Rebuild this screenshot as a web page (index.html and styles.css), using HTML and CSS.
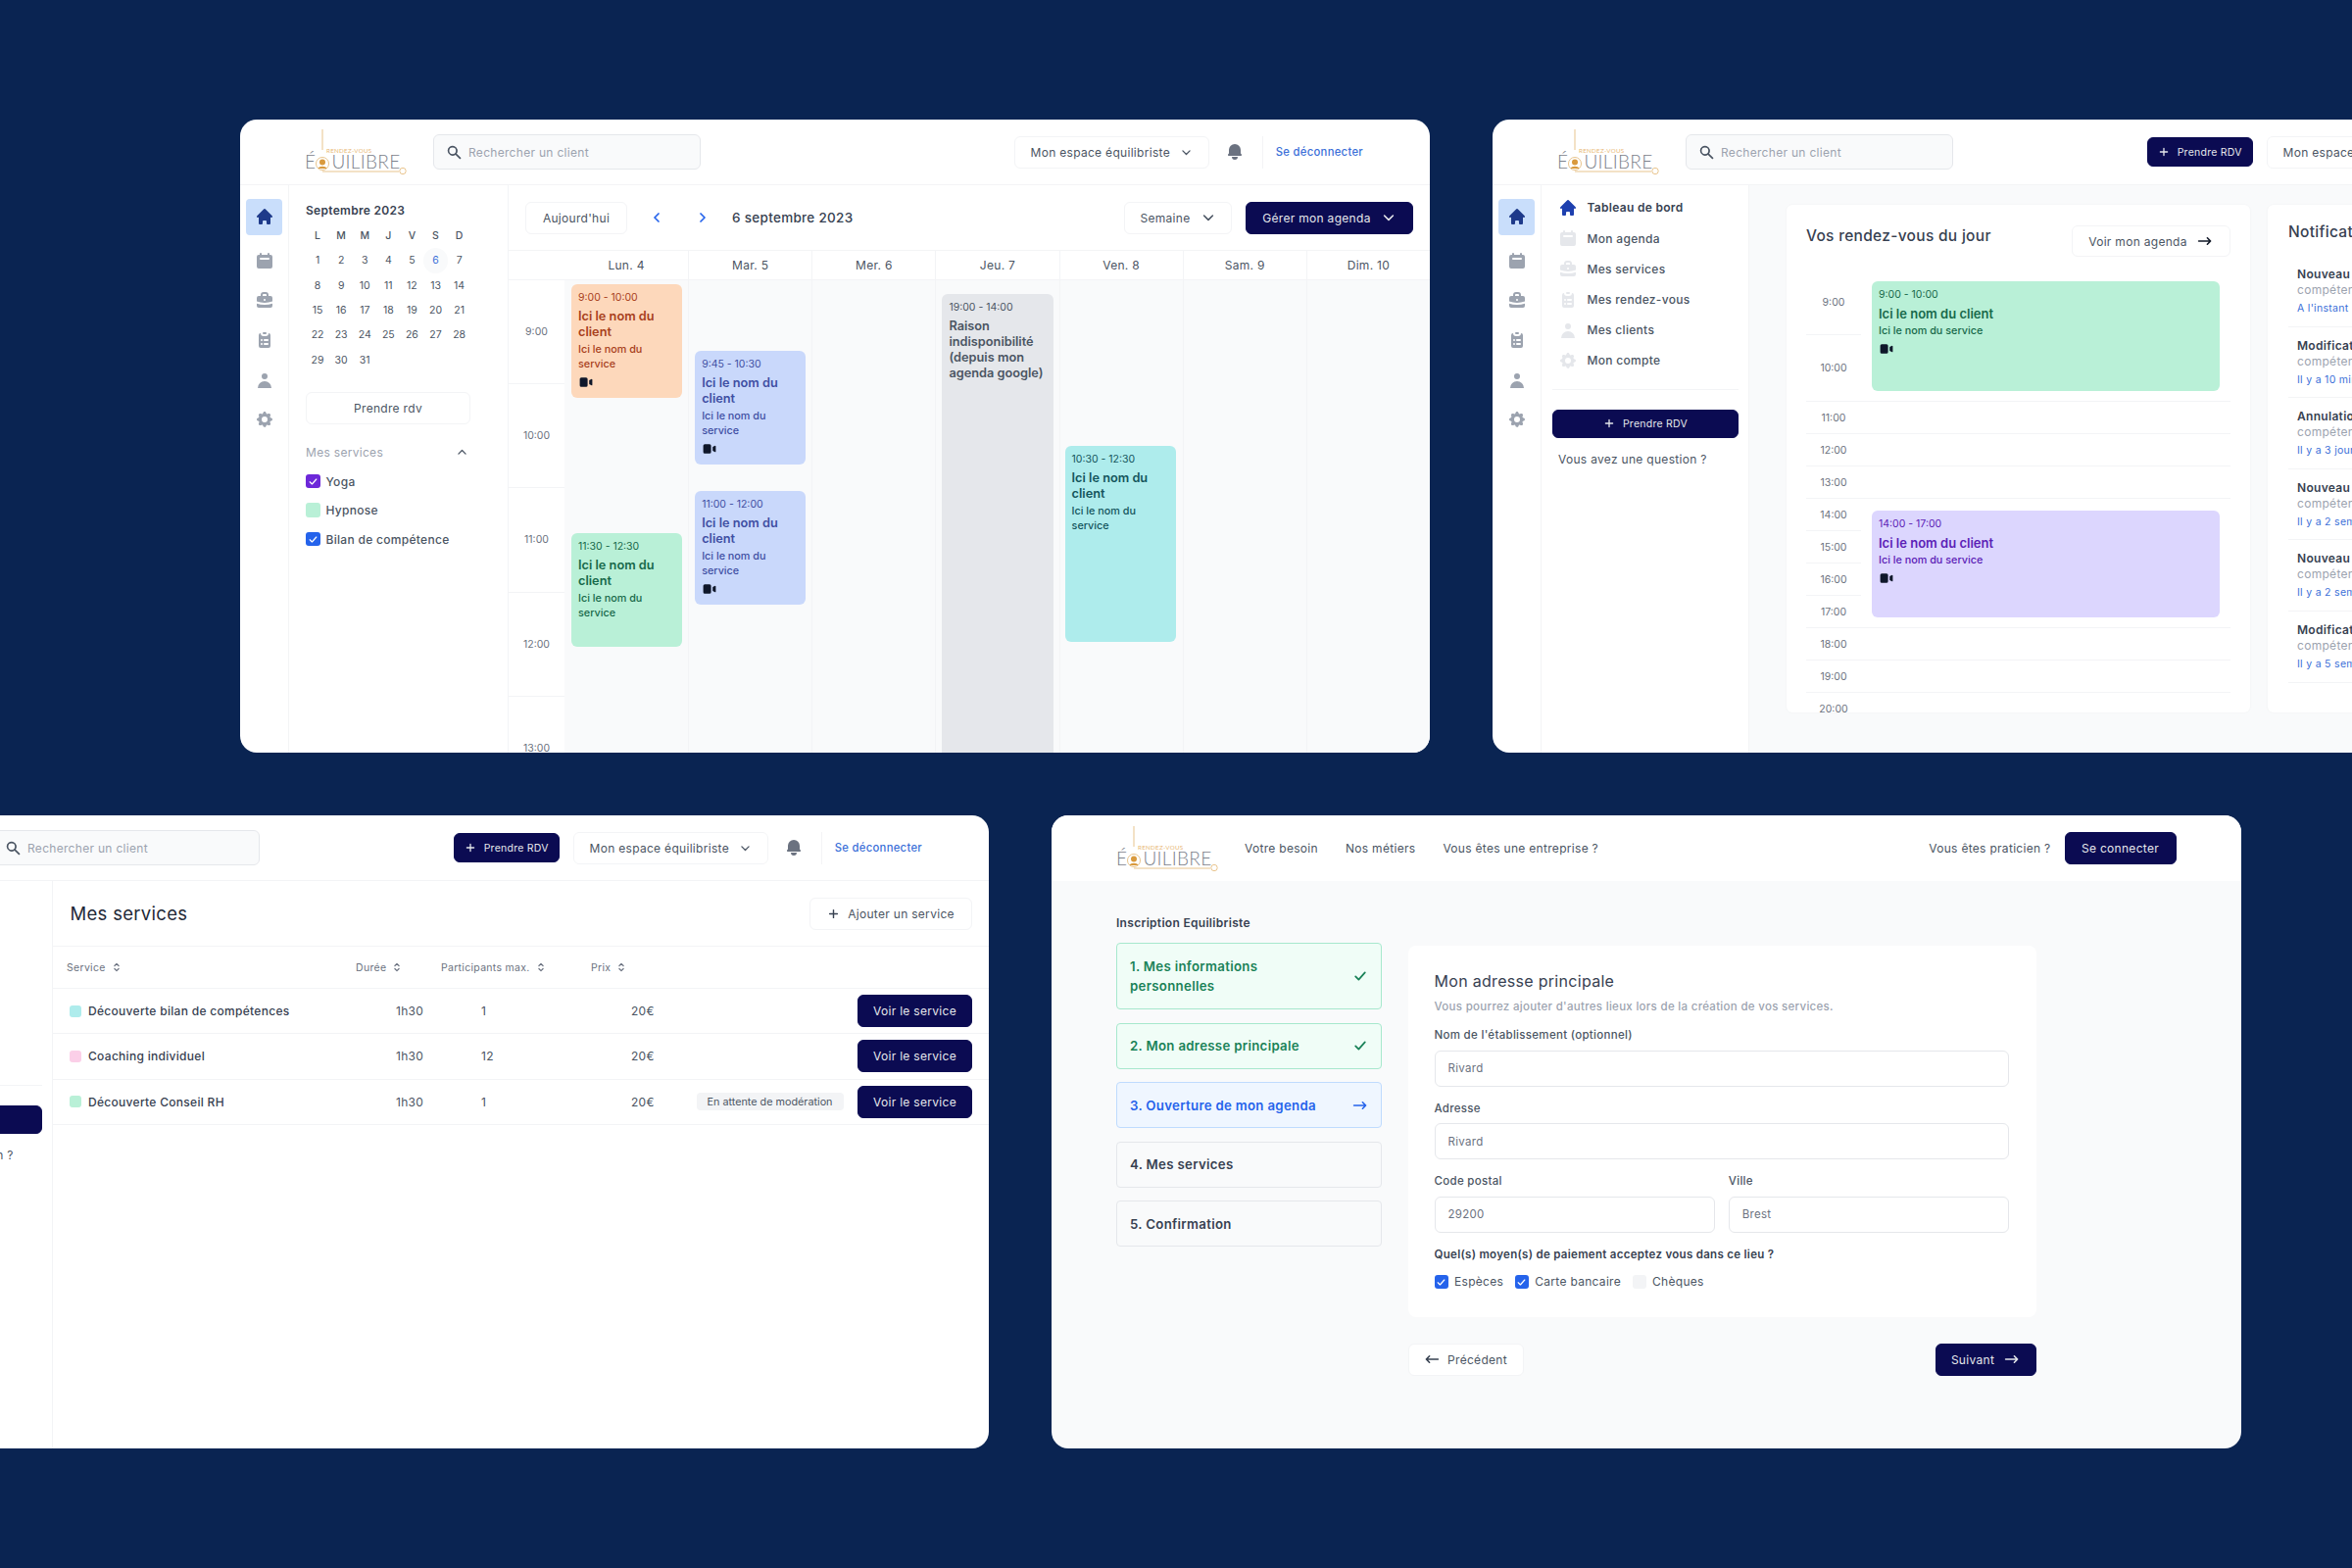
FILE: index.html
```html
<!DOCTYPE html>
<html lang="fr">
<head>
    <meta charset="UTF-8">
    <title>Equilibre - Espace equilibriste</title>
    <link rel="stylesheet" href="styles.css">
</head>
<body>
    <!-- shared icons -->
    <svg class="sprite" xmlns="http://www.w3.org/2000/svg">
        <symbol id="logo" viewBox="0 0 106 48">
            <path d="M18 1V22" fill="none" stroke="#e8c48d" stroke-width="1"/>
            <path d="M18 44H96" fill="none" stroke="#e8c48d" stroke-width="1"/>
            <circle cx="18" cy="36" r="6.5" fill="none" stroke="#e8c48d" stroke-width="1"/>
            <circle cx="18" cy="34.5" r="3" fill="#d99a3e"/>
            <path d="M13.5 41c1-3 8-3 9 0z" fill="#d99a3e"/>
            <circle cx="100" cy="43.5" r="3.2" fill="none" stroke="#e8c48d" stroke-width="1"/>
            <text x="22" y="24.5" font-family="Lato, sans-serif" font-size="6.2" letter-spacing=".3" fill="#e8b877">RENDEZ-VOUS</text>
            <text x="0" y="41" font-family="Lato, sans-serif" font-size="19" font-weight="300" fill="#7c828c">É</text>
            <text x="27.500" y="41" font-family="Lato, sans-serif" font-size="19" font-weight="300" fill="#7c828c">UILIBRE</text>
        </symbol>
        <symbol id="i-home" viewBox="0 0 20 20"><path d="M10.707 2.293a1 1 0 00-1.414 0l-7 7a1 1 0 001.414 1.414L4 10.414V17a1 1 0 001 1h2a1 1 0 001-1v-2a1 1 0 011-1h2a1 1 0 011 1v2a1 1 0 001 1h2a1 1 0 001-1v-6.586l.293.293a1 1 0 001.414-1.414l-7-7z"/></symbol>
        <symbol id="i-cal" viewBox="0 0 20 20"><path fill-rule="evenodd" d="M6 2a1 1 0 00-1 1v1H4a2 2 0 00-2 2v10a2 2 0 002 2h12a2 2 0 002-2V6a2 2 0 00-2-2h-1V3a1 1 0 10-2 0v1H7V3a1 1 0 00-1-1zm0 5a1 1 0 000 2h8a1 1 0 100-2H6z"/></symbol>
        <symbol id="i-case" viewBox="0 0 20 20"><path fill-rule="evenodd" d="M6 6V5a3 3 0 013-3h2a3 3 0 013 3v1h2a2 2 0 012 2v3.57A22.952 22.952 0 0110 13a22.95 22.95 0 01-8-1.43V8a2 2 0 012-2h2zm2-1a1 1 0 011-1h2a1 1 0 011 1v1H8V5zm1 5a1 1 0 011-1h.01a1 1 0 110 2H10a1 1 0 01-1-1z"/><path d="M2 13.692V16a2 2 0 002 2h12a2 2 0 002-2v-2.308A24.974 24.974 0 0110 15c-2.796 0-5.487-.46-8-1.308z"/></symbol>
        <symbol id="i-list" viewBox="0 0 20 20"><path d="M9 2a1 1 0 000 2h2a1 1 0 100-2H9z"/><path fill-rule="evenodd" d="M4 5a2 2 0 012-2 3 3 0 003 3h2a3 3 0 003-3 2 2 0 012 2v11a2 2 0 01-2 2H6a2 2 0 01-2-2V5zm3 4a1 1 0 000 2h.01a1 1 0 100-2H7zm3 0a1 1 0 000 2h3a1 1 0 100-2h-3zm-3 4a1 1 0 100 2h.01a1 1 0 100-2H7zm3 0a1 1 0 100 2h3a1 1 0 100-2h-3z"/></symbol>
        <symbol id="i-user" viewBox="0 0 20 20"><path fill-rule="evenodd" d="M10 9a3 3 0 100-6 3 3 0 000 6zm-7 9a7 7 0 1114 0H3z"/></symbol>
        <symbol id="i-cog" viewBox="0 0 20 20"><path fill-rule="evenodd" d="M11.49 3.17c-.38-1.56-2.6-1.56-2.98 0a1.532 1.532 0 01-2.286.948c-1.372-.836-2.942.734-2.106 2.106.54.886.061 2.042-.947 2.287-1.561.379-1.561 2.6 0 2.978a1.532 1.532 0 01.947 2.287c-.836 1.372.734 2.942 2.106 2.106a1.532 1.532 0 012.287.947c.379 1.561 2.6 1.561 2.978 0a1.533 1.533 0 012.287-.947c1.372.836 2.942-.734 2.106-2.106a1.533 1.533 0 01.947-2.287c1.561-.379 1.561-2.6 0-2.978a1.532 1.532 0 01-.947-2.287c.836-1.372-.734-2.942-2.106-2.106a1.532 1.532 0 01-2.287-.947zM10 13a3 3 0 100-6 3 3 0 000 6z"/></symbol>
        <symbol id="i-bell" viewBox="0 0 20 20"><path d="M10 2a6 6 0 00-6 6v3.586l-.707.707A1 1 0 004 14h12a1 1 0 00.707-1.707L16 11.586V8a6 6 0 00-6-6zM10 18a3 3 0 01-3-3h6a3 3 0 01-3 3z"/></symbol>
        <symbol id="i-video" viewBox="0 0 20 20"><path d="M2 6a2 2 0 012-2h6a2 2 0 012 2v8a2 2 0 01-2 2H4a2 2 0 01-2-2V6zM14.553 7.106A1 1 0 0014 8v4a1 1 0 00.553.894l2 1A1 1 0 0018 13V7a1 1 0 00-1.447-.894l-2 1z"/></symbol>
        <symbol id="i-search" viewBox="0 0 20 20"><path fill-rule="evenodd" d="M8 4a4 4 0 100 8 4 4 0 000-8zM2 8a6 6 0 1110.89 3.476l4.817 4.817a1 1 0 01-1.414 1.414l-4.816-4.816A6 6 0 012 8z"/></symbol>
        <symbol id="i-down" viewBox="0 0 20 20"><path d="M4.5 7.5L10 13l5.500-5.500" fill="none" stroke="currentColor" stroke-width="2" stroke-linecap="round" stroke-linejoin="round"/></symbol>
        <symbol id="i-up" viewBox="0 0 20 20"><path d="M4.5 12.500L10 7l5.500 5.500" fill="none" stroke="currentColor" stroke-width="2" stroke-linecap="round" stroke-linejoin="round"/></symbol>
        <symbol id="i-left" viewBox="0 0 20 20"><path d="M12.500 5L7.500 10l5 5" fill="none" stroke="currentColor" stroke-width="2.200" stroke-linecap="round" stroke-linejoin="round"/></symbol>
        <symbol id="i-right" viewBox="0 0 20 20"><path d="M7.500 5l5 5-5 5" fill="none" stroke="currentColor" stroke-width="2.200" stroke-linecap="round" stroke-linejoin="round"/></symbol>
        <symbol id="i-plus" viewBox="0 0 20 20"><path d="M10 4v12M4 10h12" fill="none" stroke="currentColor" stroke-width="2.200" stroke-linecap="round"/></symbol>
        <symbol id="i-arrow" viewBox="0 0 20 20"><path d="M2 10h15M13 6l4 4-4 4" fill="none" stroke="currentColor" stroke-width="2" stroke-linecap="round" stroke-linejoin="round"/></symbol>
        <symbol id="i-back" viewBox="0 0 20 20"><path d="M18 10H3M7 6l-4 4 4 4" fill="none" stroke="currentColor" stroke-width="2" stroke-linecap="round" stroke-linejoin="round"/></symbol>
        <symbol id="i-check" viewBox="0 0 20 20"><path d="M4 10.500l4 4 8-9" fill="none" stroke="currentColor" stroke-width="2.200" stroke-linecap="round" stroke-linejoin="round"/></symbol>
        <symbol id="i-sort" viewBox="0 0 20 20"><path d="M6.500 7.500L10 4l3.500 3.500M6.500 12.500L10 16l3.500-3.500" fill="none" stroke="currentColor" stroke-width="2" stroke-linecap="round" stroke-linejoin="round"/></symbol>
    </svg>

    <div class="wall">
        <div class="row row-top">

            <!-- agenda -->
            <section class="window">
                <header class="topbar">
                    <svg class="logo"><use href="#logo"/></svg>
                    <div class="search"><svg class="ico-search"><use href="#i-search"/></svg>Rechercher un client</div>
                    <div class="topbar-right">
                        <button class="btn btn-space">Mon espace équilibriste<svg class="ico-sm"><use href="#i-down"/></svg></button>
                        <svg class="ico-bell"><use href="#i-bell"/></svg>
                        <a class="logout">Se déconnecter</a>
                    </div>
                </header>
                <div class="app">
                    <nav class="rail">
                        <span class="rail-item active"><svg><use href="#i-home"/></svg></span>
                        <span class="rail-item"><svg><use href="#i-cal"/></svg></span>
                        <span class="rail-item"><svg><use href="#i-case"/></svg></span>
                        <span class="rail-item"><svg><use href="#i-list"/></svg></span>
                        <span class="rail-item"><svg><use href="#i-user"/></svg></span>
                        <span class="rail-item"><svg><use href="#i-cog"/></svg></span>
                    </nav>
                    <aside class="cal-panel">
                        <div class="cal-title">Septembre 2023</div>
                        <div class="cal-grid">
                            <b>L</b><b>M</b><b>M</b><b>J</b><b>V</b><b>S</b><b>D</b>
                            <span>1</span><span>2</span><span>3</span><span>4</span><span>5</span><span class="today">6</span><span>7</span>
                            <span>8</span><span>9</span><span>10</span><span>11</span><span>12</span><span>13</span><span>14</span>
                            <span>15</span><span>16</span><span>17</span><span>18</span><span>19</span><span>20</span><span>21</span>
                            <span>22</span><span>23</span><span>24</span><span>25</span><span>26</span><span>27</span><span>28</span>
                            <span>29</span><span>30</span><span>31</span>
                        </div>
                        <button class="btn btn-rdv">Prendre rdv</button>
                        <div class="svc-toggle">Mes services<svg class="ico-sm"><use href="#i-up"/></svg></div>
                        <ul class="svc-list">
                            <li><span class="box box-purple"><svg><use href="#i-check"/></svg></span>Yoga</li>
                            <li><span class="box box-mint"></span>Hypnose</li>
                            <li><span class="box box-blue"><svg><use href="#i-check"/></svg></span>Bilan de compétence</li>
                        </ul>
                    </aside>
                    <main class="agenda">
                        <div class="toolbar">
                            <button class="btn btn-today">Aujourd'hui</button>
                            <svg class="ico-nav first"><use href="#i-left"/></svg>
                            <svg class="ico-nav"><use href="#i-right"/></svg>
                            <div class="agenda-date">6 septembre 2023</div>
                            <button class="btn btn-week">Semaine<svg class="ico-md"><use href="#i-down"/></svg></button>
                            <button class="btn btn-dark btn-manage">Gérer mon agenda<svg class="ico-md"><use href="#i-down"/></svg></button>
                        </div>
                        <div class="week-head">
                            <span></span><span>Lun. 4</span><span>Mar. 5</span><span>Mer. 6</span><span>Jeu. 7</span><span>Ven. 8</span><span>Sam. 9</span><span>Dim. 10</span>
                        </div>
                        <div class="week-body">
                            <div class="hours">
                                <span>9:00</span><span>10:00</span><span>11:00</span><span>12:00</span><span>13:00</span>
                            </div>
                            <div class="day">
                                <article class="event ev-orange" style="top:4px;height:116px">
                                    <time>9:00 - 10:00</time><h4>Ici le nom du client</h4><p>Ici le nom du service</p><svg class="ico-cam"><use href="#i-video"/></svg>
                                </article>
                                <article class="event ev-green" style="top:258px;height:116px">
                                    <time>11:30 - 12:30</time><h4>Ici le nom du client</h4><p>Ici le nom du service</p>
                                </article>
                            </div>
                            <div class="day">
                                <article class="event ev-blue" style="top:72px;height:116px">
                                    <time>9:45 - 10:30</time><h4>Ici le nom du client</h4><p>Ici le nom du service</p><svg class="ico-cam"><use href="#i-video"/></svg>
                                </article>
                                <article class="event ev-blue" style="top:215px;height:116px">
                                    <time>11:00 - 12:00</time><h4>Ici le nom du client</h4><p>Ici le nom du service</p><svg class="ico-cam"><use href="#i-video"/></svg>
                                </article>
                            </div>
                            <div class="day"></div>
                            <div class="day">
                                <article class="event ev-gray" style="top:14px;height:480px">
                                    <time>19:00 - 14:00</time><h4>Raison indisponibilité (depuis mon agenda google)</h4>
                                </article>
                            </div>
                            <div class="day">
                                <article class="event ev-teal" style="top:169px;height:200px">
                                    <time>10:30 - 12:30</time><h4>Ici le nom du client</h4><p>Ici le nom du service</p>
                                </article>
                            </div>
                            <div class="day"></div>
                            <div class="day"></div>
                        </div>
                    </main>
                </div>
            </section>

            <!-- tableau de bord -->
            <section class="window">
                <header class="topbar">
                    <svg class="logo"><use href="#logo"/></svg>
                    <div class="search"><svg class="ico-search"><use href="#i-search"/></svg>Rechercher un client</div>
                    <div class="topbar-right">
                        <button class="btn btn-dark btn-top-rdv"><svg class="ico-xs"><use href="#i-plus"/></svg>Prendre RDV</button>
                        <button class="btn btn-space">Mon espace équilibriste<svg class="ico-sm"><use href="#i-down"/></svg></button>
                        <svg class="ico-bell"><use href="#i-bell"/></svg>
                        <a class="logout">Se déconnecter</a>
                    </div>
                </header>
                <div class="app">
                    <nav class="rail">
                        <span class="rail-item active"><svg><use href="#i-home"/></svg></span>
                        <span class="rail-item"><svg><use href="#i-cal"/></svg></span>
                        <span class="rail-item"><svg><use href="#i-case"/></svg></span>
                        <span class="rail-item"><svg><use href="#i-list"/></svg></span>
                        <span class="rail-item"><svg><use href="#i-user"/></svg></span>
                        <span class="rail-item"><svg><use href="#i-cog"/></svg></span>
                    </nav>
                    <aside class="nav-panel">
                        <ul class="nav-list">
                            <li class="current"><svg><use href="#i-home"/></svg>Tableau de bord</li>
                            <li><svg><use href="#i-cal"/></svg>Mon agenda</li>
                            <li><svg><use href="#i-case"/></svg>Mes services</li>
                            <li><svg><use href="#i-list"/></svg>Mes rendez-vous</li>
                            <li><svg><use href="#i-user"/></svg>Mes clients</li>
                            <li><svg><use href="#i-cog"/></svg>Mon compte</li>
                        </ul>
                        <button class="btn btn-dark btn-side"><svg class="ico-xs"><use href="#i-plus"/></svg>Prendre RDV</button>
                        <div class="question">Vous avez une question ?</div>
                    </aside>
                    <main class="dash">
                        <section class="panel schedule">
                            <div class="schedule-head">
                                <h3>Vos rendez-vous du jour</h3>
                                <button class="btn btn-see">Voir mon agenda<svg class="ico-md"><use href="#i-arrow"/></svg></button>
                            </div>
                            <div class="timeline">
                                <div class="tl-row tall short"><span>9:00</span></div>
                                <div class="tl-row tall2"><span>10:00</span></div>
                                <div class="tl-row"><span>11:00</span></div>
                                <div class="tl-row"><span>12:00</span></div>
                                <div class="tl-row"><span>13:00</span></div>
                                <div class="tl-row short"><span>14:00</span></div>
                                <div class="tl-row short"><span>15:00</span></div>
                                <div class="tl-row short"><span>16:00</span></div>
                                <div class="tl-row"><span>17:00</span></div>
                                <div class="tl-row"><span>18:00</span></div>
                                <div class="tl-row"><span>19:00</span></div>
                                <div class="tl-row"><span>20:00</span></div>
                                <article class="event tl-event ev-green" style="top:11px;height:112px">
                                    <time>9:00 - 10:00</time><h4>Ici le nom du client</h4><p>Ici le nom du service</p><svg class="ico-cam"><use href="#i-video"/></svg>
                                </article>
                                <article class="event tl-event ev-purple" style="top:245px;height:109px">
                                    <time>14:00 - 17:00</time><h4>Ici le nom du client</h4><p>Ici le nom du service</p><svg class="ico-cam"><use href="#i-video"/></svg>
                                </article>
                            </div>
                        </section>
                        <section class="panel notifs">
                            <h3>Notifications</h3>
                            <div class="notif"><b>Nouveau rendez-vous</b><span>compétences</span><em>A l'instant</em></div>
                            <div class="notif"><b>Modification</b><span>compétences</span><em>Il y a 10 minutes</em></div>
                            <div class="notif"><b>Annulation</b><span>compétences</span><em>Il y a 3 jours</em></div>
                            <div class="notif"><b>Nouveau rendez-vous</b><span>compétences</span><em>Il y a 2 semaines</em></div>
                            <div class="notif"><b>Nouveau rendez-vous</b><span>compétences</span><em>Il y a 2 semaines</em></div>
                            <div class="notif"><b>Modification</b><span>compétences</span><em>Il y a 5 semaines</em></div>
                        </section>
                    </main>
                </div>
            </section>
        </div>

        <div class="row row-bottom">

            <!-- mes services -->
            <section class="window">
                <header class="topbar">
                    <svg class="logo"><use href="#logo"/></svg>
                    <div class="search"><svg class="ico-search"><use href="#i-search"/></svg>Rechercher un client</div>
                    <div class="topbar-right">
                        <button class="btn btn-dark btn-top-rdv"><svg class="ico-xs"><use href="#i-plus"/></svg>Prendre RDV</button>
                        <button class="btn btn-space">Mon espace équilibriste<svg class="ico-sm"><use href="#i-down"/></svg></button>
                        <svg class="ico-bell"><use href="#i-bell"/></svg>
                        <a class="logout">Se déconnecter</a>
                    </div>
                </header>
                <div class="app">
                    <nav class="rail">
                        <span class="rail-item active"><svg><use href="#i-home"/></svg></span>
                        <span class="rail-item"><svg><use href="#i-cal"/></svg></span>
                    </nav>
                    <aside class="nav-panel nav-panel-narrow">
                        <ul class="nav-list">
                            <li class="current"><svg><use href="#i-home"/></svg>Tableau de bord</li>
                            <li><svg><use href="#i-cal"/></svg>Mon agenda</li>
                            <li><svg><use href="#i-case"/></svg>Mes services</li>
                            <li><svg><use href="#i-list"/></svg>Mes rendez-vous</li>
                            <li><svg><use href="#i-user"/></svg>Mes clients</li>
                            <li><svg><use href="#i-cog"/></svg>Mon compte</li>
                        </ul>
                        <button class="btn btn-dark btn-side"><svg class="ico-xs"><use href="#i-plus"/></svg>Prendre RDV</button>
                        <div class="question">Vous avez une question ?</div>
                    </aside>
                    <main class="services">
                        <div class="services-head">
                            <h2>Mes services</h2>
                            <button class="btn btn-add"><svg class="ico-sm"><use href="#i-plus"/></svg>Ajouter un service</button>
                        </div>
                        <div class="svc-grid svc-cols">
                            <span>Service<svg><use href="#i-sort"/></svg></span>
                            <span>Durée<svg><use href="#i-sort"/></svg></span>
                            <span>Participants max.<svg><use href="#i-sort"/></svg></span>
                            <span>Prix<svg><use href="#i-sort"/></svg></span>
                        </div>
                        <div class="svc-grid svc-row">
                            <span class="svc-name"><i class="dot dot-teal"></i>Découverte bilan de compétences</span>
                            <span>1h30</span><span>1</span><span>20€</span>
                            <span class="svc-actions"><button class="btn btn-dark btn-view">Voir le service</button></span>
                        </div>
                        <div class="svc-grid svc-row">
                            <span class="svc-name"><i class="dot dot-pink"></i>Coaching individuel</span>
                            <span>1h30</span><span>12</span><span>20€</span>
                            <span class="svc-actions"><button class="btn btn-dark btn-view">Voir le service</button></span>
                        </div>
                        <div class="svc-grid svc-row">
                            <span class="svc-name"><i class="dot dot-mint"></i>Découverte Conseil RH</span>
                            <span>1h30</span><span>1</span><span>20€</span>
                            <span class="svc-actions"><em class="badge">En attente de modération</em><button class="btn btn-dark btn-view">Voir le service</button></span>
                        </div>
                    </main>
                </div>
            </section>

            <!-- inscription -->
            <section class="window window-signup">
                <header class="topbar topbar-plain">
                    <svg class="logo"><use href="#logo"/></svg>
                    <nav class="site-nav"><a>Votre besoin</a><a>Nos métiers</a><a>Vous êtes une entreprise ?</a></nav>
                    <div class="topbar-right">
                        <a class="site-link">Vous êtes praticien ?</a>
                        <button class="btn btn-dark btn-login">Se connecter</button>
                    </div>
                </header>
                <div class="signup">
                    <div class="signup-title">Inscription Equilibriste</div>
                    <div class="signup-body">
                        <ol class="steps">
                            <li class="step done two-lines"><span>1. Mes informations personnelles</span><svg><use href="#i-check"/></svg></li>
                            <li class="step done"><span>2. Mon adresse principale</span><svg><use href="#i-check"/></svg></li>
                            <li class="step current"><span>3. Ouverture de mon agenda</span><svg><use href="#i-arrow"/></svg></li>
                            <li class="step"><span>4. Mes services</span></li>
                            <li class="step"><span>5. Confirmation</span></li>
                        </ol>
                        <div class="signup-main">
                            <form class="form-card">
                                <h3>Mon adresse principale</h3>
                                <p class="form-sub">Vous pourrez ajouter d'autres lieux lors de la création de vos services.</p>
                                <div class="field"><label>Nom de l'établissement (optionnel)</label><input value="Rivard" readonly></div>
                                <div class="field"><label>Adresse</label><input value="Rivard" readonly></div>
                                <div class="field-pair">
                                    <div class="field"><label>Code postal</label><input value="29200" readonly></div>
                                    <div class="field"><label>Ville</label><input value="Brest" readonly></div>
                                </div>
                                <div class="pay-title">Quel(s) moyen(s) de paiement acceptez vous dans ce lieu ?</div>
                                <div class="pay-options">
                                    <span><span class="box box-blue"><svg><use href="#i-check"/></svg></span>Espèces</span>
                                    <span><span class="box box-blue"><svg><use href="#i-check"/></svg></span>Carte bancaire</span>
                                    <span><span class="box box-empty"></span>Chèques</span>
                                </div>
                            </form>
                            <div class="form-nav">
                                <button class="btn btn-prev"><svg class="ico-md"><use href="#i-back"/></svg>Précédent</button>
                                <button class="btn btn-dark btn-next">Suivant<svg class="ico-md"><use href="#i-arrow"/></svg></button>
                            </div>
                        </div>
                    </div>
                </div>
            </section>
        </div>
    </div>
</body>
</html>
```

FILE: styles.css
```css
* {
    box-sizing: border-box;
}

html, body {
    height: 100%;
}

body {
    margin: 0;
    background-color: #0a2452;
    font-family: Inter, "Liberation Sans", sans-serif;
    font-size: 12px;
    letter-spacing: .025em;
    color: #4b5563;
    overflow: hidden;
}

h2, h3, h4, p, ul, ol {
    margin: 0;
    padding: 0;
    font-weight: 500;
    list-style: none;
}

svg {
    fill: currentColor;
}

.sprite {
    display: none;
}

.wall {
    display: flex;
    flex-direction: column;
    gap: 64px;
    padding-top: 122px;
}

.row {
    display: flex;
    gap: 64px;
}

.row-top {
    margin-left: 245px;
}

.row-bottom {
    margin-left: -205px;
}

.window {
    flex: none;
    display: flex;
    flex-direction: column;
    width: 1214px;
    height: 646px;
    background-color: #fff;
    border-radius: 17px;
    overflow: hidden;
}

/* top bar */
.topbar {
    flex: none;
    display: flex;
    align-items: center;
    height: 67px;
    padding: 0 68px 0 66px;
    border-bottom: 1px solid #f3f4f6;
}

.topbar-plain {
    border-bottom: 0;
    padding-right: 66.500px;
}

.logo {
    flex: none;
    width: 106px;
    height: 48px;
    margin-right: 25px;
}

.search {
    display: flex;
    align-items: center;
    width: 273px;
    height: 36px;
    padding-left: 12px;
    background-color: #f9fafb;
    border: 1px solid #e5e7eb;
    border-radius: 6px;
    color: #9ca3af;
}

.ico-search {
    width: 17px;
    height: 17px;
    margin-right: 6px;
    color: #4b5563;
}

.topbar-right {
    display: flex;
    align-items: center;
    margin-left: auto;
}

.btn {
    display: flex;
    align-items: center;
    justify-content: center;
    height: 33px;
    padding: 0;
    background-color: #fff;
    border: 1px solid #f3f4f6;
    border-radius: 6px;
    font: inherit;
    font-size: 12px;
    letter-spacing: .025em;
    color: #4b5563;
}

.btn-dark {
    background-color: #0b0b52;
    border-color: #0b0b52;
    color: #e5e7eb;
}

.btn-top-rdv {
    width: 108px;
    height: 30px;
    margin-right: 14px;
    font-size: 10.5px;
}

.btn-space {
    width: 199px;
}

.ico-xs {
    width: 12px;
    height: 12px;
    margin-right: 8px;
}

.ico-sm {
    width: 13px;
    height: 13px;
    margin-left: 10px;
}

.ico-md {
    width: 16px;
    height: 16px;
    margin-left: 10px;
}

.ico-bell {
    width: 20px;
    height: 20px;
    margin-left: 16px;
    color: #6b7280;
}

.logout {
    margin-left: 18px;
    padding-left: 13px;
    border-left: 1px solid #f3f4f6;
    line-height: 33px;
    color: #3b6fd8;
    font-weight: 500;
    font-size: 11.250px;
}

/* shared app layout */
.app {
    flex: 1;
    display: flex;
    min-height: 0;
}

.rail {
    flex: none;
    display: flex;
    flex-direction: column;
    align-items: center;
    gap: 3.700px;
    width: 50px;
    padding-top: 14px;
    border-right: 1px solid #f3f4f6;
    color: #9ca3af;
}

.rail-item {
    display: flex;
    align-items: center;
    justify-content: center;
    width: 37px;
    height: 37px;
    border-radius: 4px;
}

.rail-item svg {
    width: 20px;
    height: 20px;
    margin-top: -1px;
}

.rail-item.active {
    margin-bottom: 4px;
    background-color: #c9defb;
    color: #1e3a8a;
}

/* calendar side */
.cal-panel {
    flex: none;
    width: 224px;
    padding: 18px 0 0 17px;
    border-right: 1px solid #f3f4f6;
}

.cal-title {
    line-height: 16px;
    font-weight: 600;
    color: #374151;
}

.cal-grid {
    display: grid;
    grid-template-columns: repeat(7, 24.100px);
    grid-auto-rows: 25.300px;
    margin-top: 5px;
    font-size: 10.5px;
    letter-spacing: 0;
}

.cal-grid b, .cal-grid span {
    display: flex;
    align-items: center;
    justify-content: center;
    font-weight: 400;
}

.cal-grid b {
    font-weight: 500;
}

.cal-grid .today {
    background-color: #f9fafb;
    border-radius: 50%;
    color: #3b6fd8;
}

.btn-rdv {
    width: 168px;
    margin-top: 20px;
}

.svc-toggle {
    display: flex;
    align-items: center;
    justify-content: space-between;
    width: 168px;
    margin-top: 21px;
    padding-right: 2px;
    line-height: 16px;
    color: #9ca3af;
}

.svc-toggle svg {
    color: #4b5563;
}

.svc-list {
    margin-top: 6.500px;
}

.svc-list li {
    display: flex;
    align-items: center;
    gap: 6px;
    height: 29.500px;
}

.box {
    flex: none;
    display: flex;
    align-items: center;
    justify-content: center;
    width: 14.500px;
    height: 14.500px;
    border-radius: 3px;
    color: #fff;
}

.box svg {
    width: 11px;
    height: 11px;
}

.box-purple {
    background-color: #6d28d9;
}

.box-mint {
    background-color: #b9f0d7;
}

.box-blue {
    background-color: #2563eb;
}

.box-empty {
    background-color: #f3f4f6;
}

/* week view */
.agenda {
    flex: 1;
    display: flex;
    flex-direction: column;
    min-width: 0;
}

.toolbar {
    flex: none;
    display: flex;
    align-items: center;
    height: 67px;
    padding: 0 17px;
    border-bottom: 1px solid #f3f4f6;
}

.btn-today {
    width: 104px;
}

.ico-nav {
    width: 16px;
    height: 16px;
    margin-left: 31px;
    color: #2563eb;
}

.ico-nav.first {
    margin-left: 22px;
}

.agenda-date {
    margin-left: 22px;
    font-size: 13.500px;
    font-weight: 500;
    color: #374151;
}

.btn-week {
    width: 110px;
    margin-left: auto;
}

.btn-manage {
    width: 171px;
    margin-left: 14px;
}

.week-head, .week-body {
    display: grid;
    grid-template-columns: 57px repeat(7, 1fr);
}

.week-head {
    flex: none;
    height: 30px;
    border-bottom: 1px solid #f3f4f6;
}

.week-head span {
    display: flex;
    align-items: center;
    justify-content: center;
    border-left: 1px solid #f3f4f6;
}

.week-head span:first-child, .week-head span:nth-child(2) {
    border-left: 0;
}

.week-body {
    flex: 1;
    min-height: 0;
}

.hours span {
    display: flex;
    align-items: center;
    justify-content: center;
    height: 106.200px;
    border-bottom: 1px solid #f3f4f6;
    font-size: 10.5px;
    letter-spacing: 0;
    color: #6b7280;
}

.day {
    position: relative;
    background-color: #f9fafb;
    border-left: 1px solid #f3f4f6;
}

.day:nth-child(2) {
    border-left: 0;
}

.event {
    position: absolute;
    left: 6px;
    right: 6px;
    padding: 7px 6px 0 7px;
    border-radius: 6px;
    overflow: hidden;
    font-size: 10.500px;
    letter-spacing: 0;
}

.day:nth-child(2) .event {
    left: 7px;
}

.day:nth-child(6) .event {
    left: 5px;
    right: 7px;
}

.event time {
    display: block;
    line-height: 14px;
}

.event h4 {
    margin-top: 3.500px;
    font-size: 12.750px;
    font-weight: 600;
    line-height: 16px;
}

.event p {
    margin-top: 2px;
    font-size: 10.800px;
    line-height: 15px;
}

.ico-cam {
    display: block;
    width: 16px;
    height: 16px;
    margin-top: 3px;
    color: #0f172a;
}

.ev-orange { background-color: #fdd8bb; color: #a8401c; }
.ev-green { background-color: #b9f0d7; color: #17694a; }
.ev-blue { background-color: #c9d8fb; color: #3f4fa3; }
.ev-gray { background-color: #e5e7eb; color: #4b5563; }
.ev-teal { background-color: #aeecec; color: #14555c; }
.ev-purple { background-color: #dcd6fe; color: #5b21b6; }

/* dashboard */
.nav-panel {
    flex: none;
    width: 212px;
    padding: 7.400px 10px 0 11px;
    border-right: 1px solid #f3f4f6;
}

.nav-panel-narrow {
    width: 209px;
}

.nav-list {
    padding-bottom: 13px;
    border-bottom: 1px solid #f3f4f6;
}

.nav-list li {
    display: flex;
    align-items: center;
    gap: 10px;
    height: 31.200px;
    padding-left: 5.500px;
    color: #4b5563;
}

.nav-list svg {
    width: 20px;
    height: 20px;
    color: #e5e7eb;
}

.nav-list .current {
    font-weight: 600;
    color: #374151;
}

.nav-list .current svg {
    color: #1e40af;
}

.btn-side {
    width: 100%;
    height: 29px;
    margin-top: 20px;
    font-size: 10.500px;
}

.question {
    margin: 14px 0 0 6px;
    line-height: 16px;
    color: #4b5563;
}

.dash {
    flex: 1;
    display: flex;
    gap: 18.500px;
    padding: 20px 0 0 38px;
    background-color: #f9fafb;
    min-width: 0;
}

.panel {
    flex: none;
    height: 518px;
    background-color: #fff;
    border-radius: 6px;
    box-shadow: 0 0 3px rgba(0, 0, 0, .04);
    overflow: hidden;
}

.schedule {
    position: relative;
    width: 472.500px;
    padding: 0 20px;
}

.schedule-head {
    display: flex;
    justify-content: space-between;
    align-items: flex-start;
    height: 67px;
    padding-top: 21px;
}

.schedule-head h3 {
    font-size: 15.500px;
    color: #374151;
    line-height: 22px;
}

.btn-see {
    width: 162px;
    height: 32px;
}

.btn-see svg {
    color: #111827;
}

.timeline {
    position: relative;
}

.tl-row {
    height: 33px;
    border-bottom: 1px solid #f3f4f6;
}

.tl-row span {
    display: flex;
    align-items: center;
    justify-content: center;
    width: 56px;
    height: 100%;
    font-size: 10.500px;
    letter-spacing: 0;
    color: #6b7280;
}

.tl-row.tall {
    height: 66px;
}

.tl-row.tall2 {
    height: 68px;
}

.tl-row.short {
    border-bottom: 0;
}

.tl-row.short span {
    border-bottom: 1px solid #f3f4f6;
}

.tl-event {
    left: 67px;
    right: 11px;
}

.tl-event h4 {
    font-size: 13px;
}

.notifs {
    width: 300px;
    padding: 17px 0 0 21px;
}

.notifs h3 {
    font-size: 15.500px;
    line-height: 22px;
    color: #374151;
    margin-bottom: 13px;
}

.notif {
    display: flex;
    flex-direction: column;
    height: 72.600px;
    padding: 11px 0 0 9px;
    border-bottom: 1px solid #f3f4f6;
    white-space: nowrap;
}

.notif b {
    font-weight: 600;
    line-height: 16px;
    color: #374151;
}

.notif span {
    line-height: 16px;
    color: #9ca3af;
}

.notif em {
    margin-top: 4px;
    font-style: normal;
    font-size: 10.500px;
    line-height: 14px;
    color: #3b6fd8;
}

/* services table */
.services {
    flex: 1;
    min-width: 0;
}

.services-head {
    display: flex;
    justify-content: space-between;
    align-items: center;
    height: 67px;
    padding: 0 17px 0 17.500px;
    border-bottom: 1px solid #f3f4f6;
}

.services-head h2 {
    font-size: 18.500px;
    font-weight: 400;
    color: #1f2937;
}

.btn-add {
    width: 166px;
}

.btn-add .ico-sm {
    margin: 0 8px 0 0;
    color: #374151;
}

.svc-grid {
    display: grid;
    grid-template-columns: 309px 87px 153px 1fr;
    align-items: center;
    border-bottom: 1px solid #f3f4f6;
}

.svc-cols {
    height: 43px;
    font-size: 10.500px;
    color: #6b7280;
}

.svc-cols span {
    display: flex;
    align-items: center;
    gap: 5px;
}

.svc-cols span:first-child {
    padding-left: 14px;
}

.svc-cols svg {
    width: 12px;
    height: 12px;
}

.svc-row {
    grid-template-columns: 309px 87px 153px 43px 1fr;
    height: 46.300px;
}

.svc-row span {
    padding-left: 41px;
}

.svc-row .svc-name {
    display: flex;
    align-items: center;
    gap: 7px;
    padding-left: 17px;
    font-weight: 500;
    color: #374151;
}

.dot {
    width: 12px;
    height: 12px;
    border-radius: 3px;
}

.dot-teal { background-color: #aeecec; }
.dot-pink { background-color: #fbcfe8; }
.dot-mint { background-color: #b9f0d7; }

.svc-row .svc-actions {
    display: flex;
    align-items: center;
    justify-content: flex-end;
    gap: 14.500px;
    padding: 0 17px 0 0;
}

.badge {
    display: flex;
    align-items: center;
    justify-content: center;
    width: 150px;
    height: 18px;
    background-color: #f3f4f6;
    border-radius: 4px;
    font-style: normal;
    font-size: 10.800px;
    letter-spacing: 0;
}

.btn-view {
    width: 117px;
}

/* sign up */
.window-signup {
    background-color: #f9fafb;
}

.window-signup .topbar {
    background-color: #fff;
}

.site-nav {
    display: flex;
    gap: 28px;
    font-size: 12px;
}

.site-link {
    margin-right: 14px;
}

.btn-login {
    width: 114px;
}

.signup {
    padding: 35px 0 0 66px;
}

.signup-title {
    line-height: 16px;
    font-weight: 600;
    color: #374151;
}

.signup-body {
    display: flex;
    gap: 26.500px;
    margin-top: 12px;
}

.steps {
    flex: none;
    display: flex;
    flex-direction: column;
    gap: 13.500px;
    width: 271px;
}

.step {
    display: flex;
    align-items: center;
    justify-content: space-between;
    height: 47px;
    padding: 0 13px;
    background-color: #f9fafb;
    border: 1px solid #e5e7eb;
    border-radius: 4px;
    font-size: 13.250px;
    font-weight: 600;
    line-height: 20px;
    color: #374151;
}

.step svg {
    flex: none;
    width: 16px;
    height: 16px;
}

.two-lines {
    height: 68px;
}

.two-lines span {
    width: 190px;
}

.step.done {
    background-color: #f0fdf7;
    border-color: #a7e8cd;
    color: #1a8258;
}

.step.current {
    background-color: #eff6ff;
    border-color: #bfdbfe;
    color: #2563eb;
}

.signup-main {
    margin-top: 2.500px;
}

.form-card {
    width: 641px;
    height: 379px;
    padding: 24px 27.500px 0 27px;
    background-color: #fff;
    border-radius: 8px;
}

.form-card h3 {
    font-size: 16px;
    font-weight: 400;
    line-height: 24px;
    color: #374151;
}

.form-sub {
    margin: 6px 0 13.500px;
    line-height: 16px;
    font-size: 11.500px;
    color: #9ca3af;
}

.field {
    margin-bottom: 14px;
}

.field label {
    display: block;
    margin-bottom: 7.500px;
    line-height: 16px;
    font-size: 11.500px;
    font-weight: 500;
}

.field input {
    display: block;
    width: 100%;
    height: 37px;
    padding: 0 13px;
    border: 1px solid #e5e7eb;
    border-radius: 6px;
    font: inherit;
    font-size: 11.500px;
    letter-spacing: .025em;
    color: #6b7280;
}

.field-pair {
    display: grid;
    grid-template-columns: 1fr 1fr;
    gap: 14px;
}

.pay-title {
    line-height: 16px;
    font-size: 11.500px;
    font-weight: 600;
    color: #374151;
}

.pay-options {
    display: flex;
    gap: 11.500px;
    margin-top: 12.500px;
}

.pay-options > span {
    display: flex;
    align-items: center;
    gap: 6px;
    line-height: 16px;
}

.form-nav {
    display: flex;
    justify-content: space-between;
    margin-top: 27px;
}

.btn-prev {
    width: 118px;
}

.btn-prev svg {
    margin: 0 8px 0 0;
    color: #374151;
}

.btn-next {
    width: 103px;
}
```
